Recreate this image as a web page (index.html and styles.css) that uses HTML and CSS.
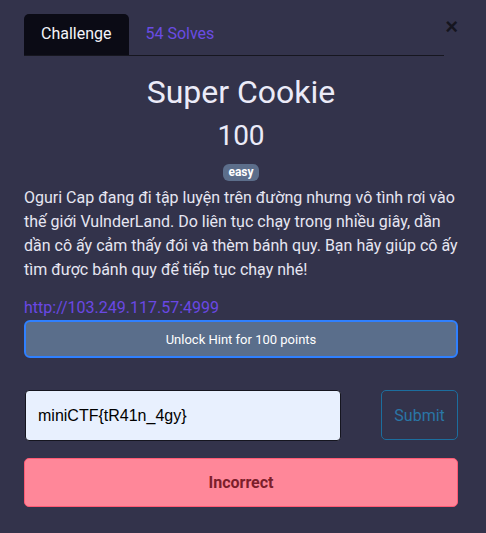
FILE: index.html
```html
<!DOCTYPE html>
<html>
<head>
<meta charset="utf-8">
<link rel="stylesheet" href="styles.css">
</head>
<body>
<div class="modal">
  <div class="head">
    <nav class="tabs">
      <span class="tab active">Challenge</span>
      <span class="tab">54 Solves</span>
    </nav>
    <span class="close">&times;</span>
  </div>
  <h2 class="title">Super Cookie</h2>
  <h3 class="value">100</h3>
  <div class="tags"><span class="badge">easy</span></div>
  <p class="desc">Oguri Cap đang đi tập luyện trên đường nhưng vô tình rơi vào thế giới VulnderLand. Do liên tục chạy trong nhiều giây, dần dần cô ấy cảm thấy đói và thèm bánh quy. Bạn hãy giúp cô ấy tìm được bánh quy để tiếp tục chạy nhé!</p>
  <a class="link">http://103.249.117.57:4999</a>
  <button class="hint">Unlock Hint for 100 points</button>
  <div class="submit-row">
    <div class="input">miniCTF{tR41n_4gy}</div>
    <button class="submit">Submit</button>
  </div>
  <div class="result">Incorrect</div>
</div>
</body>
</html>
```
FILE: styles.css
```css
html, body {
  margin: 0;
  padding: 0;
  background: #33334b;
  font-family: Roboto, "Liberation Sans", sans-serif;
}
.modal {
  padding: 14px 28px 20px 24px;
  display: flex;
  flex-direction: column;
}
.head {
  display: flex;
  align-items: flex-start;
}
.tabs {
  display: flex;
  width: 421px;
  border-bottom: 1px solid #16161f;
}
.tab {
  height: 41px;
  box-sizing: border-box;
  padding: 10px 17px 0;
  font-size: 16px;
  color: #6a4ce4;
}
.tab.active {
  background: #0b0b15;
  color: #f4f4fa;
  border-radius: 5px 5px 0 0;
}
.close {
  margin-left: 1px;
  margin-top: 2px;
  font-size: 22px;
  line-height: 22px;
  font-weight: bold;
  color: #15151f;
  font-family: "Liberation Sans", sans-serif;
}
.title {
  margin: 18px 0 0;
  text-align: center;
  font-size: 32px;
  font-weight: normal;
  line-height: 36px;
  color: #ebebf8;
}
.value {
  margin: 10px 0 0;
  text-align: center;
  font-size: 28px;
  font-weight: normal;
  line-height: 32px;
  color: #ebebf8;
}
.tags {
  text-align: center;
  margin-top: 10px;
  line-height: 17px;
}
.badge {
  display: inline-block;
  background: #5c6e8b;
  color: #ffffff;
  font-weight: bold;
  font-size: 12px;
  line-height: 17px;
  padding: 0 5px;
  border-radius: 6px;
}
.desc {
  margin: 5px 0 0;
  font-size: 16px;
  line-height: 24px;
  color: #e6e6f2;
}
.link {
  margin-top: 16px;
  font-size: 16px;
  line-height: 20px;
  color: #6a48e4;
}
.hint {
  margin-top: 2px;
  height: 38px;
  width: 434px;
  background: #5a6e8b;
  border: 2px solid #2f80ff;
  border-radius: 6px;
  color: #ffffff;
  font-family: Roboto, "Liberation Sans", sans-serif;
  font-size: 13px;
}
.submit-row {
  display: flex;
  margin-top: 32px;
  gap: 40px;
}
.input {
  box-sizing: border-box;
  width: 317px;
  height: 51px;
  margin-left: 1px;
  background: #e8f0fe;
  border: 1px solid #15151f;
  border-radius: 4px;
  padding: 0 0 0 12px;
  display: flex;
  align-items: center;
  font-family: "Liberation Sans", Arial, sans-serif;
  font-size: 16px;
  color: #000000;
}
.submit {
  box-sizing: border-box;
  width: 77px;
  height: 50px;
  background: transparent;
  border: 1px solid #1c6e9e;
  border-radius: 5px;
  color: #2a76a6;
  font-family: Roboto, "Liberation Sans", sans-serif;
  font-size: 16px;
}
.result {
  margin-top: 17px;
  box-sizing: border-box;
  height: 49px;
  background: #ff8799;
  border: 1px solid #ff5a74;
  border-radius: 5px;
  display: flex;
  align-items: center;
  justify-content: center;
  font-weight: bold;
  font-size: 16px;
  color: #7c1e2b;
}
```
